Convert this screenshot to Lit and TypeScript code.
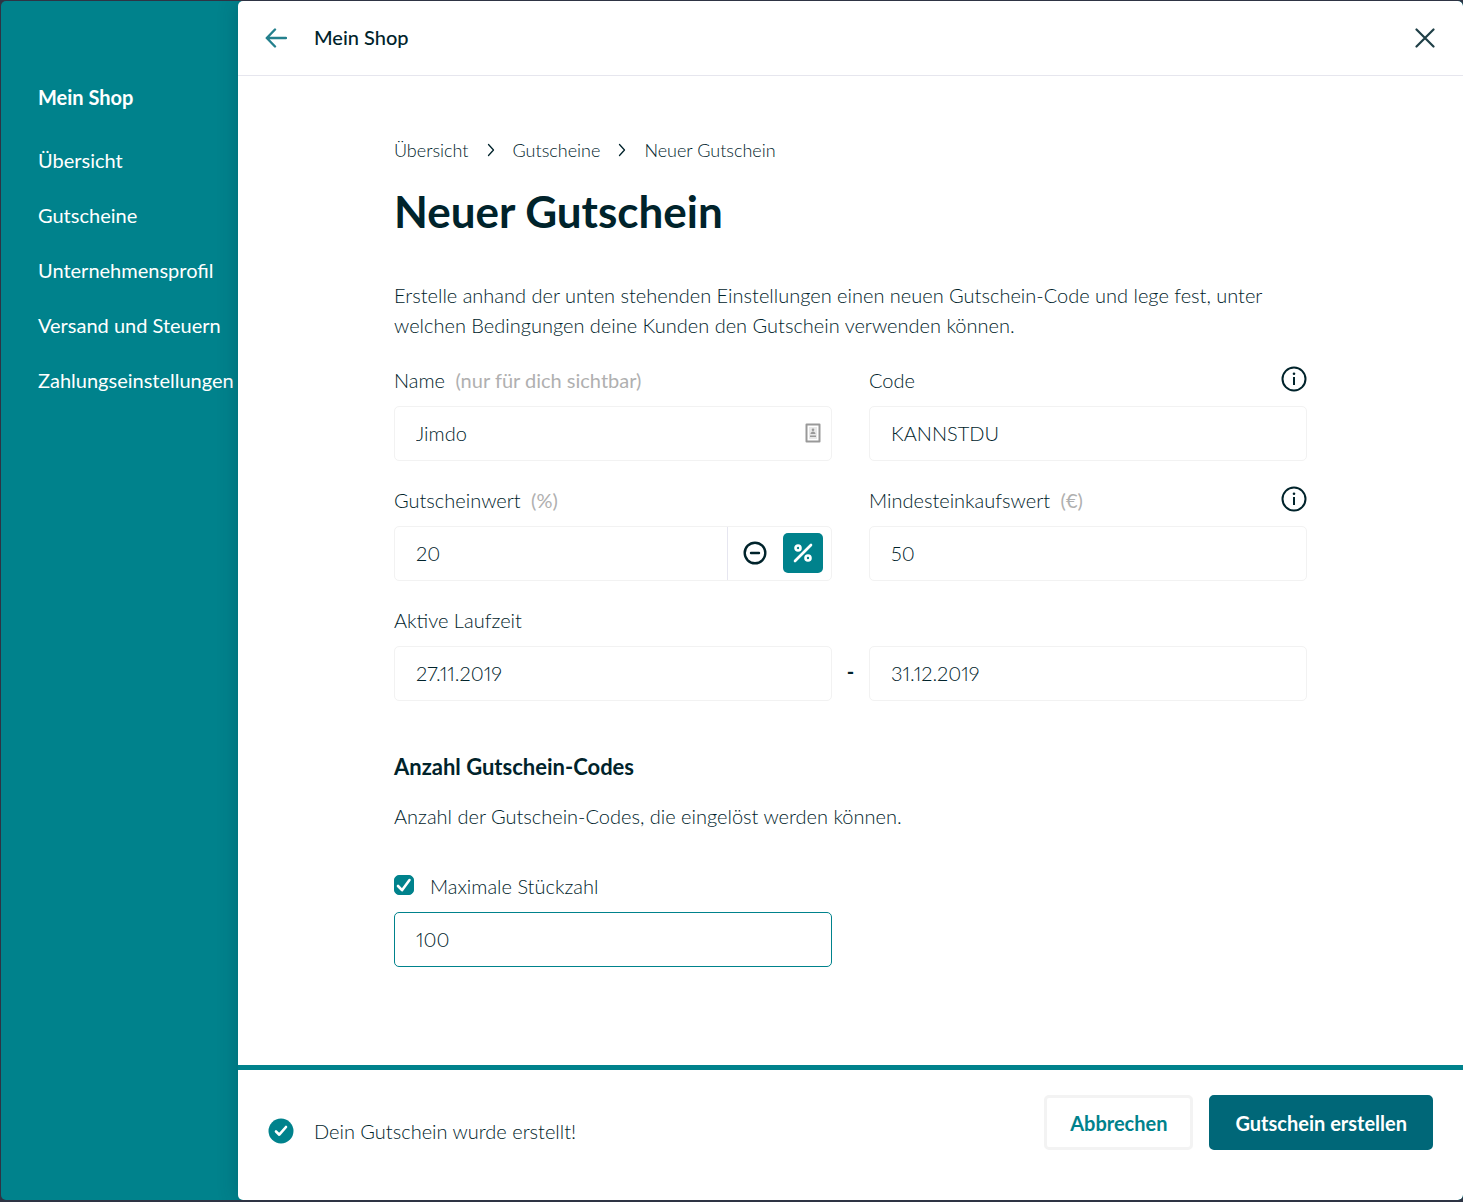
import { LitElement, html, css, svg, nothing } from "lit";
import type { TemplateResult } from "lit";
import { customElement, property, state } from "lit/decorators.js";
import { live } from "lit/directives/live.js";

const icon = (w: number, h: number, body: TemplateResult) =>
  html`<svg width=${w} height=${h} viewBox="0 0 ${w} ${h}" fill="none" stroke="currentColor"
    stroke-width="2" stroke-linecap="round" stroke-linejoin="round" aria-hidden="true">${body}</svg>`;

const arrowLeft = icon(22, 20, svg`<path stroke-width="2.400" d="M10 1.500 1.800 10l8.200 8.500M1.800 10H21"/>`);
const closeIcon = icon(20, 20, svg`<path stroke-width="2.200" d="M1.500 1.500 18.500 18.500M18.500 1.500 1.500 18.500"/>`);
const chevron = icon(8, 14, svg`<path stroke-width="1.300" d="M1.500 1.500 6.500 7l-5 5.500"/>`);
const infoIcon = icon(26, 26, svg`
  <circle cx="13" cy="13" r="11.500"/>
  <path stroke-linecap="butt" d="M13 11v8"/>
  <circle cx="13" cy="7.700" r="1.300" fill="currentColor" stroke="none"/>`);
const minusIcon = icon(24, 24, svg`<circle cx="12" cy="12" r="10.300" stroke-width="2.400"/><path stroke-width="2.400" d="M8 12h8"/>`);
const percentIcon = icon(20, 20, svg`
  <circle cx="5" cy="5" r="2.500" stroke-width="2.600"/><circle cx="15" cy="15" r="2.500" stroke-width="2.600"/>
  <path stroke-width="2.600" d="M18 2 2 18"/>`);
const tickIcon = icon(20, 20, svg`<path stroke-width="2.600" d="M4 11l4 4.200L15.500 5"/>`);
const doneIcon = icon(26, 26, svg`
  <circle cx="13" cy="13" r="12.500" fill="currentColor" stroke="none"/>
  <path stroke="#fff" stroke-width="2.600" d="M8 13.500l3.300 3.200L18 9"/>`);
const contactIcon = icon(16, 20, svg`
  <rect x="1.500" y="1.500" width="13" height="17" stroke-width="2"/>
  <rect x="4" y="4" width="8" height="12" fill="#e8e8e8" stroke="none"/>
  <circle cx="8" cy="6.700" r="1.300" fill="currentColor" stroke="none"/>
  <path fill="currentColor" stroke="none" d="M5.500 11c0-3.500 5-3.500 5 0zM5 12.500h6v1.500H5z"/>`);

const controls = css`
  * { box-sizing: border-box; }
  svg { display: block; flex: none; }
  button { font: inherit; color: inherit; background: none; border: 0; padding: 0; cursor: pointer; }
`;

@customElement("shop-nav")
class ShopNav extends LitElement {
  @property({ attribute: false }) items: string[] = [];

  static styles = [controls, css`
    :host { display: block; padding: 81px 0 0 37px; color: #fff; font-weight: 400; }
    .title { margin: 0 0 33px; font-size: 20px; line-height: 30px; font-weight: 700; }
    .list { list-style: none; margin: 0; padding: 0; display: grid; gap: 25px; }
    .link { display: block; color: inherit; text-decoration: none; line-height: 30px; white-space: nowrap; }
  `];

  render() {
    return html`<nav aria-label="Mein Shop">
      <h2 class="title">Mein Shop</h2>
      <ul class="list">
        ${this.items.map((item) => html`<li><a class="link" href="#">${item}</a></li>`)}
      </ul>
    </nav>`;
  }
}

@customElement("voucher-field")
class VoucherField extends LitElement {
  @property() label = "";
  @property() hint = "";
  @property() value = "";
  @property({ type: Boolean }) info = false;
  @property({ type: Boolean }) contact = false;
  @property({ type: Boolean }) units = false;
  @property({ type: Boolean }) active = false;
  @property({ type: Boolean }) bare = false;

  static styles = [controls, css`
    :host { display: block; min-width: 0; }
    .head { display: flex; justify-content: space-between; height: 30px; margin-bottom: 10px; line-height: 28px; }
    .hint { margin-left: 5px; color: #b0b0b0; font-weight: 400; }
    .info { align-self: start; color: #00232b; }
    .box { display: flex; align-items: center; height: 55px; border: 1px solid #f2f2f2; border-radius: 5px; background: #fff; }
    .box.active { border-color: #00828c; }
    .input {
      flex: 1; min-width: 0; height: 100%; border: 0; padding: 0 21px 2px; background: none; outline: 0;
      font: inherit; font-variant-numeric: proportional-nums; color: inherit;
    }
    .contact { margin-right: 10px; padding-bottom: 1px; color: #999; }
    .units { display: flex; align-items: center; height: 100%; padding: 0 8px 1px 7px; gap: 8px; border-left: 1px solid #e6e6f0; color: #00232b; }
    .unit { display: grid; place-items: center; width: 40px; height: 40px; border-radius: 5px; }
    .unit.on { background: #00828c; color: #fff; }
  `];

  render() {
    return html`
      ${this.bare ? nothing : html`<div class="head">
        <label for="input">${this.label} ${this.hint ? html`<span class="hint">(${this.hint})</span>` : nothing}</label>
        ${this.info ? html`<button class="info" type="button" aria-label="Info">${infoIcon}</button>` : nothing}
      </div>`}
      <div class="box ${this.active ? "active" : ""}">
        <input class="input" id="input" type="text" .value=${this.value} aria-label=${this.bare ? this.label : nothing} />
        ${this.contact ? html`<span class="contact">${contactIcon}</span>` : nothing}
        ${this.units ? html`<div class="units">
          <button class="unit" type="button" aria-label="Betrag">${minusIcon}</button>
          <button class="unit on" type="button" aria-label="Prozent" aria-pressed="true">${percentIcon}</button>
        </div>` : nothing}
      </div>`;
  }
}

@customElement("app-root")
class AppRoot extends LitElement {
  @state() private limited = true;

  private pages = ["Übersicht", "Gutscheine", "Unternehmensprofil", "Versand und Steuern", "Zahlungseinstellungen"];
  private trail = ["Übersicht", "Gutscheine", "Neuer Gutschein"];

  static styles = [controls, css`
    :host {
      display: block; min-height: 100vh; box-sizing: border-box; padding: 1px 0 2px 1px;
      background: #2e3444; color: #00232b;
      font-family: Lato, "Liberation Sans", sans-serif; font-size: 20px; line-height: 30px; font-weight: 300;
    }
    .frame { display: grid; grid-template-columns: 237px minmax(0, 1fr); min-height: calc(100vh - 3px); background: #00828c; border-radius: 5px; overflow: hidden; }
    .main { display: flex; flex-direction: column; background: #fff; border-radius: 5px; box-shadow: 0 0 20px rgba(0, 40, 50, 0.25); }
    .bar { display: flex; align-items: center; gap: 27px; height: 75px; padding: 0 28px 0 27px; border-bottom: 1px solid #e6e6ee; }
    .bar-title { flex: 1; margin: 0; padding-bottom: 2px; font-size: 20px; font-weight: 500; }
    .back { color: #24808d; }
    .close { color: #1f3f47; }
    .content { flex: 1; width: 100%; max-width: 973px; margin: 0 auto; padding: 59px 30px; }
    .trail { display: flex; gap: 18px; list-style: none; margin: 0 0 16px; padding: 0; font-size: 18px; }
    .crumb { display: flex; align-items: center; gap: 18px; }
    .crumb-link { color: inherit; text-decoration: none; }
    .title { margin: 0 0 39px; font-size: 44px; line-height: 60px; font-weight: 700; }
    .text { margin: 0; }
    .fields { display: grid; grid-template-columns: repeat(2, minmax(0, 1fr)); gap: 25px 37px; margin-top: 26px; }
    .dates { grid-column: 1 / -1; display: grid; grid-template-columns: minmax(0, 1fr) 37px minmax(0, 1fr); align-items: end; }
    .dash { line-height: 55px; padding-bottom: 2px; text-align: center; font-weight: 700; }
    .subtitle { margin: 51px 0 19px; font-size: 22px; line-height: 30px; font-weight: 700; }
    .limit { display: flex; gap: 16px; margin: 40px 0 11px; }
    .check { display: grid; width: 20px; height: 20px; margin-top: 4px; color: #fff; }
    .check > * { grid-area: 1 / 1; }
    .check svg { pointer-events: none; }
    .tick { appearance: none; width: 20px; height: 20px; margin: 0; border: 1px solid #00828c; border-radius: 5px; }
    .tick:checked { background: #00828c; }
    .amount { width: calc((100% - 37px) / 2); }
    .foot { display: flex; gap: 16px; padding: 25px 30px 50px; border-top: 5px solid #00828c; }
    .status { flex: 1; display: flex; align-items: center; gap: 20px; margin: 8px 0 -8px; }
    .done { color: #00828c; }
    .btn { height: 55px; padding: 0 23px; border: 3px solid #f3f3f3; border-radius: 5px; font-weight: 700; color: #00828c; }
    .btn.primary { border-color: #006778; background: #006778; color: #fff; }
  `];

  render() {
    return html`<div class="frame">
      <shop-nav .items=${this.pages}></shop-nav>
      <div class="main">
        <header class="bar">
          <button class="back" type="button" aria-label="Zurück">${arrowLeft}</button>
          <p class="bar-title">Mein Shop</p>
          <button class="close" type="button" aria-label="Schließen">${closeIcon}</button>
        </header>
        <main class="content">
          <ol class="trail">
            ${this.trail.map((name, i) => html`<li class="crumb">
              ${i ? chevron : nothing}<a class="crumb-link" href="#">${name}</a>
            </li>`)}
          </ol>
          <h1 class="title">Neuer Gutschein</h1>
          <p class="text">Erstelle anhand der unten stehenden Einstellungen einen neuen Gutschein-Code und lege fest, unter welchen Bedingungen deine Kunden den Gutschein verwenden können.</p>
          <div class="fields">
            <voucher-field label="Name" hint="nur für dich sichtbar" value="Jimdo" contact></voucher-field>
            <voucher-field label="Code" value="KANNSTDU" info></voucher-field>
            <voucher-field label="Gutscheinwert" hint="%" value="20" units></voucher-field>
            <voucher-field label="Mindesteinkaufswert" hint="€" value="50" info></voucher-field>
            <div class="dates">
              <voucher-field label="Aktive Laufzeit" value="27.11.2019"></voucher-field>
              <span class="dash">-</span>
              <voucher-field label="Laufzeitende" value="31.12.2019" bare></voucher-field>
            </div>
          </div>
          <h2 class="subtitle">Anzahl Gutschein-Codes</h2>
          <p class="text">Anzahl der Gutschein-Codes, die eingelöst werden können.</p>
          <div class="limit">
            <span class="check">
              <input class="tick" id="limit" type="checkbox" .checked=${live(this.limited)}
                @change=${(e: Event) => (this.limited = (e.target as HTMLInputElement).checked)} />
              ${tickIcon}
            </span>
            <label for="limit">Maximale Stückzahl</label>
          </div>
          <voucher-field class="amount" label="Stückzahl" value="100" bare active></voucher-field>
        </main>
        <footer class="foot">
          <div class="status" role="status"><span class="done">${doneIcon}</span>Dein Gutschein wurde erstellt!</div>
          <button class="btn" type="button">Abbrechen</button>
          <button class="btn primary" type="submit">Gutschein erstellen</button>
        </footer>
      </div>
    </div>`;
  }
}
